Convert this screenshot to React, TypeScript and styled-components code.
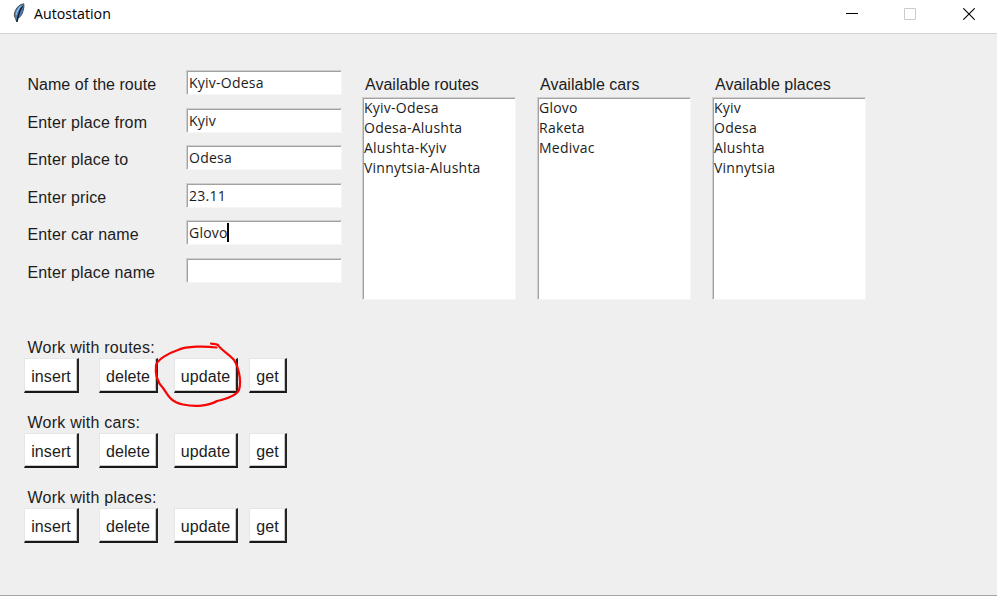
import React from "react";
import styled, { createGlobalStyle, css } from "styled-components";

const Global = createGlobalStyle`
  * { box-sizing: border-box; }
  body { margin: 0; background: #f0f0f0; overflow: hidden; }
`;

const Window = styled.div`
  position: relative;
  display: flex;
  flex-direction: column;
  width: 997px;
  height: 596px;
  background: #efefef;
  border-bottom: 1px solid #a3a3a3;
  color: #1c1c1c;
  font: 16px/20px "Liberation Sans", Arial, sans-serif;
`;

const TitleBar = styled.header`
  display: flex;
  flex: none;
  align-items: flex-start;
  height: 34px;
  padding-left: 12px;
  background: #fff;
  border-bottom: 1px solid #d4d4d4;
`;

const Title = styled.h1`
  flex: 1;
  margin: 4px 0 0 8px;
  color: #000;
  font: 400 14.2px/20px "Open Sans", "Noto Sans", sans-serif;
`;

const Feather = styled.svg`
  width: 14px;
  height: 20px;
  margin-top: 3px;
`;

const Controls = styled.div`
  display: flex;
  width: 174px;
`;

const Control = styled.button`
  display: flex;
  width: 58px;
  height: 28px;
  padding: 0;
  border: 0;
  background: none;
  align-items: center;
  justify-content: center;
`;

const CloseControl = styled(Control)`
  padding-left: 2px;
`;

const Top = styled.section`
  display: flex;
  height: 266px;
  padding: 36px 0 0 27.5px;
`;

const Form = styled.div`
  display: grid;
  grid-template-columns: 158.5px 156px;
  grid-auto-rows: 37.5px;
  margin-right: 20px;
`;

const Label = styled.label<{ $tight?: boolean }>`
  padding-top: 5px;
  letter-spacing: ${(p) => (p.$tight ? "0.03px" : "0.14px")};
  white-space: nowrap;
`;

const sunken = css`
  border: solid;
  border-width: 1px;
  border-color: #cfcfcf #f6f6f6 #f6f6f6 #cfcfcf;
  background: #fff;
  box-shadow: inset 1px 1px #a2a2a2;
  font: 14px/20px "Open Sans", "Noto Sans", sans-serif;
  letter-spacing: 0.24px;
`;

const Entry = styled.div`
  ${sunken}
  display: flex;
  align-items: center;
  height: 25px;
  padding: 1px 1px 0 2px;
`;

const Caret = styled.span`
  width: 2px;
  height: 19px;
  margin-left: -1px;
  margin-top: -1px;
  background: #000;
`;

const ListColumn = styled.div`
  width: 175px;
  padding-top: 5px;
`;

const ListTitle = styled.div`
  height: 21.5px;
  padding-left: 3px;
  letter-spacing: 0.02px;
  white-space: nowrap;
`;

const ListBox = styled.ul`
  ${sunken}
  width: 154px;
  height: 203px;
  margin: 0;
  padding: 0 0 0 1px;
  list-style: none;
`;

const Actions = styled.main`
  display: grid;
  grid-auto-rows: 75px;
  padding: 37.5px 0 0 24px;
`;

const GroupTitle = styled.div`
  height: 20.5px;
  padding-left: 3.5px;
  letter-spacing: 0.24px;
`;

const ButtonRow = styled.div`
  display: grid;
  grid-template-columns: 75px 75px 75px 38px;
`;

const ActionButton = styled.button<{ $width: number }>`
  width: ${(p) => p.$width}px;
  height: 35px;
  padding: 3px 0 0;
  border: solid;
  border-width: 1px 2px 2px 1px;
  border-color: #e6e6e6 #242424 #181818 #e6e6e6;
  background: #fff;
  box-shadow: inset -1px -1px #c9c9c9;
  color: #1c1c1c;
  font: inherit;
  letter-spacing: 0.1px;
`;

const Annotation = styled.svg`
  position: absolute;
  left: 150px;
  top: 338px;
  width: 98px;
  height: 74px;
  pointer-events: none;
`;

const fields = [
  { label: "Name of the route", value: "Kyiv-Odesa", tight: true },
  { label: "Enter place from", value: "Kyiv" },
  { label: "Enter place to", value: "Odesa" },
  { label: "Enter price", value: "23.11" },
  { label: "Enter car name", value: "Glovo", focused: true },
  { label: "Enter place name", value: "" },
];

const lists = [
  { title: "Available routes", items: ["Kyiv-Odesa", "Odesa-Alushta", "Alushta-Kyiv", "Vinnytsia-Alushta"] },
  { title: "Available cars", items: ["Glovo", "Raketa", "Medivac"] },
  { title: "Available places", items: ["Kyiv", "Odesa", "Alushta", "Vinnytsia"] },
];

const buttons: [string, number][] = [["insert", 55], ["delete", 59], ["update", 64], ["get", 38]];

export default function App() {
  return (
    <Window>
      <Global />
      <TitleBar>
        <Feather viewBox="0 0 14 20">
          <path d="M4.6 18.500L3.600 15.500C1.800 13.500 2 10.500 3.400 7.500C5 4 8 1.200 11.800 .8C12.400 4.500 11 10.500 8.300 13.500L5.700 15.600Z" fill="#4d83bd" stroke="#4a4d52" strokeWidth="1" />
          <path d="M10.500 3C8 7 6.200 11 4.900 19" fill="none" stroke="#17202c" strokeWidth="1.5" />
          <path d="M9.500 2.800C6.800 5 4.800 8 4.300 12" fill="none" stroke="#8db8e4" strokeWidth="1.300" />
        </Feather>
        <Title>Autostation</Title>
        <Controls>
          <Control aria-label="Minimize"><svg width="12" height="12"><path d="M0 5.5H12" stroke="#000" /></svg></Control>
          <Control aria-label="Maximize"><svg width="12" height="12"><path d="M.5 .5H11.5V11.5H.5Z" fill="none" stroke="#ccc" /></svg></Control>
          <CloseControl aria-label="Close"><svg width="12" height="12"><path d="M.3 .3L11.7 11.7M11.7 .3L.3 11.7" stroke="#000" strokeWidth="1.1" /></svg></CloseControl>
        </Controls>
      </TitleBar>
      <Top>
        <Form>
          {fields.map((field) => (
            <React.Fragment key={field.label}>
              <Label $tight={field.tight}>{field.label}</Label>
              <Entry>{field.value}{field.focused && <Caret />}</Entry>
            </React.Fragment>
          ))}
        </Form>
        {lists.map((list) => (
          <ListColumn key={list.title}>
            <ListTitle>{list.title}</ListTitle>
            <ListBox>{list.items.map((item) => <li key={item}>{item}</li>)}</ListBox>
          </ListColumn>
        ))}
      </Top>
      <Actions>
        {["routes", "cars", "places"].map((kind) => (
          <section key={kind}>
            <GroupTitle>Work with {kind}:</GroupTitle>
            <ButtonRow>
              {buttons.map(([name, width]) => <ActionButton key={name} $width={width}>{name}</ActionButton>)}
            </ButtonRow>
          </section>
        ))}
      </Actions>
      <Annotation viewBox="150 338 98 74">
        <path d="M216.5 347.5C205 346 187 346 178 350C169 353 158 359 156 365C155 374 157 382 163 388C168 395 170 402 183 404.500C195 407 209 406 217 401C226 399 236 396 239 390C242 380 238 366 234 360C229 354 221 350 218 345C216 343.500 214 344 211 343.700" fill="none" stroke="#f80505" strokeWidth="2.2" strokeLinecap="round" strokeLinejoin="round" />
      </Annotation>
    </Window>
  );
}
